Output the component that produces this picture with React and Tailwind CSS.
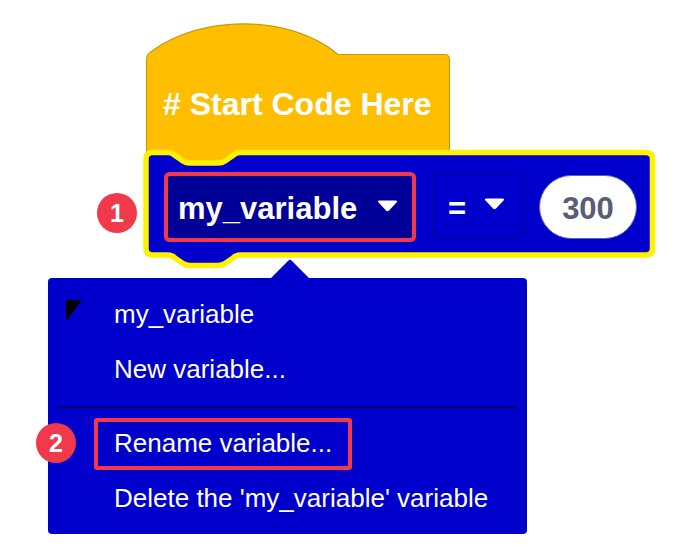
import React from "react";

function Caret({ className = "" }) {
  return (
    <svg width="21" height="12" viewBox="0 0 21 12" className={className}>
      <path d="M2.5 0.5 H18.5 Q21 0.5 19.5 2.5 L12 10.5 Q10.5 12 9 10.5 L1.5 2.5 Q0 0.5 2.5 0.5 Z" fill="#ffffff" />
    </svg>
  );
}

function Badge({ n, className = "" }) {
  return (
    <div className={`absolute w-10 h-10 rounded-full bg-[#f0394a] flex items-center justify-center text-white font-bold text-[25px] leading-none ${className}`}>
      {n}
    </div>
  );
}

export default function App() {
  return (
    <div className="relative w-[698px] h-[560px] bg-white overflow-hidden font-['Liberation_Sans',Arial,sans-serif]">
      {/* block shapes */}
      <svg width="698" height="560" className="absolute inset-0">
        <path
          d="M146.5 164 V60 Q146.5 55 150 52.5 C200 14 290 14 338 54.5 H444.5 Q449.5 54.5 449.5 59.5 V164 Z"
          fill="#ffbf00"
          stroke="#c99a10"
          strokeWidth="1.2"
        />
        <path
          d="M146 159 Q146 152.5 152.5 152.5 H168 C171 152.5 173 153.5 175 155.5 L183 161 C185 162.5 187 163 190 163 H218 C221 163 223 162.5 225 161 L233 155.5 C235 153.5 237 152.5 240 152.5 H646 Q652.5 152.5 652.5 159 V248.5 Q652.5 255 646 255 H240 C237 255 235 256 233 258 L225 263.5 C223 265 221 265.5 218 265.5 H190 C187 265.5 185 265 183 263.5 L175 258 C173 256 171 255 168 255 H152.5 Q146 255 146 248.5 Z"
          fill="#0000cc"
          stroke="#fff200"
          strokeWidth="5.5"
          strokeLinejoin="round"
        />
        <path d="M270 279 L288.5 260.5 Q290 259 291.5 260.5 L310 279 Z" fill="#0000cc" />
      </svg>

      {/* hat block label */}
      <div className="absolute left-[146px] top-[54px] pl-[17px] pt-[34px]">
        <div className="text-white font-bold text-[32px] leading-none whitespace-nowrap">
          # Start Code Here
        </div>
      </div>

      {/* variable block contents */}
      <div className="absolute left-[146px] top-[153px] pl-[22px] pt-[22px] flex items-center">
        <div className="w-[244px] h-[62px] bg-[#000099] ring-4 ring-[#f0394a] rounded-[2px] flex items-center pl-[10px] pt-[2px]">
          <span className="text-white font-bold text-[31px] leading-none whitespace-nowrap">my_variable</span>
          <Caret className="ml-[20px] -mt-[4px]" />
        </div>
        <div className="ml-[20px] w-[91px] h-[64px] rounded-[7px] border-[1.5px] border-[#0a0a88] flex items-center pl-[15px] pt-[2px]">
          <span className="text-white font-bold text-[31px] leading-none">=</span>
          <Caret className="ml-[18px] -mt-[8px]" />
        </div>
        <div className="ml-[16px] w-[98px] h-[64px] rounded-full bg-white border-[1.5px] border-[#5a61ad] flex items-center justify-center pt-[2px]">
          <span className="text-[#575e75] font-bold text-[31px] leading-none">300</span>
        </div>
      </div>

      {/* dropdown menu */}
      <div className="absolute left-[48px] top-[278px] w-[479px] h-[256px] bg-[#0000cc] rounded-[4px] pt-[9px] text-white text-[26px]">
        <div className="h-[55px] flex items-center pl-[18px]">
          <svg width="16" height="21" viewBox="0 0 16 21" className="-mt-[9px]">
            <path d="M0 0 H16 L0 21 Z" fill="#000000" />
          </svg>
          <span className="ml-[32px]">my_variable</span>
        </div>
        <div className="h-[55px] flex items-center pl-[66px]">New variable...</div>
        <div className="mx-[10px] mt-[9px] mb-[8px] h-[1.5px] bg-[#00006e]" />
        <div className="h-[55px] flex items-center pl-[66px]">Rename variable...</div>
        <div className="h-[55px] flex items-center pl-[66px] whitespace-nowrap">Delete the 'my_variable' variable</div>
        <div className="absolute left-[46px] top-[140px] w-[258px] h-[52px] border-4 border-[#f0394a] rounded-[3px]" />
      </div>

      <Badge n="1" className="left-[97px] top-[193px]" />
      <Badge n="2" className="left-[36px] top-[423px]" />
    </div>
  );
}
